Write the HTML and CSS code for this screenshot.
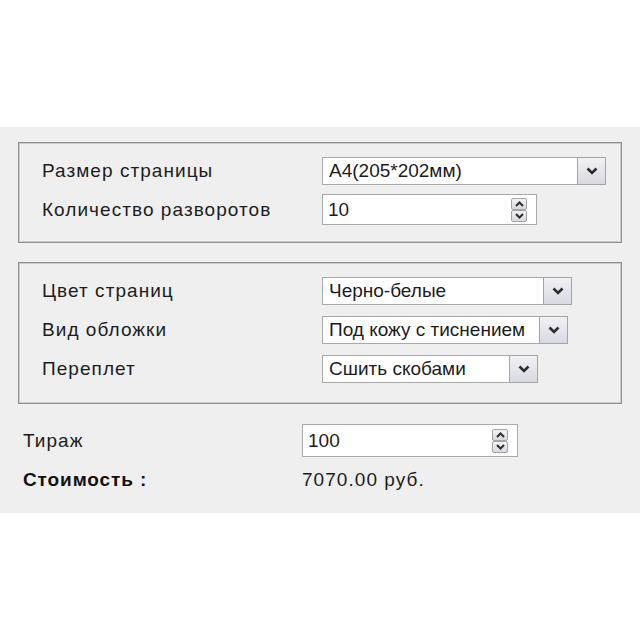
FILE: index.html
```html
<!DOCTYPE html>
<html lang="ru">
<head>
<meta charset="utf-8">
<title>Калькулятор</title>
<link rel="stylesheet" href="styles.css">
</head>
<body>
<div class="top"></div>
<div class="panel">
  <div class="group g1">
    <span class="label">Размер страницы</span>
    <div class="select s1"><span class="val">A4(205*202мм)</span><span class="btn"><svg width="12" height="8" viewBox="0 0 12 8"><polyline points="1.5,1.5 6,6 10.5,1.5" fill="none" stroke="#2e2e2e" stroke-width="2.6"/></svg></span></div>
    <span class="label">Количество разворотов</span>
    <div class="spin sp1"><span class="val">10</span><span class="arrows"><span class="ab"><svg width="9" height="6" viewBox="0 0 9 6"><polyline points="1,5 4.5,1.5 8,5" fill="none" stroke="#2e2e2e" stroke-width="2"/></svg></span><span class="ab"><svg width="9" height="6" viewBox="0 0 9 6"><polyline points="1,1 4.5,4.5 8,1" fill="none" stroke="#2e2e2e" stroke-width="2"/></svg></span></span></div>
  </div>
  <div class="group g2">
    <span class="label">Цвет страниц</span>
    <div class="select s2"><span class="val">Черно-белые</span><span class="btn"><svg width="12" height="8" viewBox="0 0 12 8"><polyline points="1.5,1.5 6,6 10.5,1.5" fill="none" stroke="#2e2e2e" stroke-width="2.6"/></svg></span></div>
    <span class="label">Вид обложки</span>
    <div class="select s3"><span class="val">Под кожу с тиснением</span><span class="btn"><svg width="12" height="8" viewBox="0 0 12 8"><polyline points="1.5,1.5 6,6 10.5,1.5" fill="none" stroke="#2e2e2e" stroke-width="2.6"/></svg></span></div>
    <span class="label">Переплет</span>
    <div class="select s4"><span class="val">Сшить скобами</span><span class="btn"><svg width="12" height="8" viewBox="0 0 12 8"><polyline points="1.5,1.5 6,6 10.5,1.5" fill="none" stroke="#2e2e2e" stroke-width="2.6"/></svg></span></div>
  </div>
  <div class="totals">
    <span class="label">Тираж</span>
    <div class="spin sp2"><span class="val">100</span><span class="arrows"><span class="ab"><svg width="9" height="6" viewBox="0 0 9 6"><polyline points="1,5 4.5,1.5 8,5" fill="none" stroke="#2e2e2e" stroke-width="2"/></svg></span><span class="ab"><svg width="9" height="6" viewBox="0 0 9 6"><polyline points="1,1 4.5,4.5 8,1" fill="none" stroke="#2e2e2e" stroke-width="2"/></svg></span></span></div>
    <span class="label bold">Стоимость :</span>
    <span class="price">7070.00 руб.</span>
  </div>
</div>
</body>
</html>
```

FILE: styles.css
```css
body {
  margin: 0;
  background: #ffffff;
  font-family: "Liberation Sans", Arial, sans-serif;
  font-size: 19px;
  color: #1c1c1c;
}
.top {
  height: 127px;
}
.panel {
  background: #efefef;
  height: 386px;
  padding: 15px 18px 0;
  box-sizing: border-box;
}
.group {
  border: 1px solid #8e8e8e;
  box-shadow: inset 0 0 0 1px #cdcdcd;
  display: grid;
  grid-template-columns: 280px auto;
  justify-content: start;
  align-items: center;
}
.g1 {
  padding: 14px 0 17px 23px;
  row-gap: 9px;
}
.g2 {
  margin-top: 19px;
  padding: 14px 0 20px 23px;
  row-gap: 11px;
}
.totals {
  margin-top: 20px;
  padding-left: 5px;
  display: grid;
  grid-template-columns: 279px auto;
  justify-content: start;
  align-items: center;
  row-gap: 12px;
}
.label {
  white-space: nowrap;
  letter-spacing: 1.05px;
}
.bold {
  font-weight: bold;
  letter-spacing: 0.9px;
  color: #111;
}
.select, .spin {
  display: flex;
  align-items: center;
  background: #ffffff;
  border: 1px solid #a9a9a9;
  box-sizing: border-box;
}
.select {
  height: 28px;
}
.select .val {
  flex: 1;
  padding-left: 6px;
  white-space: nowrap;
}
.select .btn {
  align-self: stretch;
  width: 27px;
  border: 1px solid #a4a4a4;
  background: linear-gradient(#f0f0f5, #d9d9e2);
  display: flex;
  align-items: center;
  justify-content: center;
  margin: -1px -1px -1px 0;
}
.s1 { width: 284px; }
.s2 { width: 250px; }
.s3 { width: 246px; }
.s4 { width: 216px; }
.spin .val {
  flex: 1;
  padding-left: 5px;
}
.sp1 {
  width: 215px;
  height: 31px;
}
.sp2 {
  width: 216px;
  height: 33px;
}
.arrows {
  display: flex;
  flex-direction: column;
  margin-right: 9px;
}
.ab {
  width: 16px;
  height: 12px;
  box-sizing: border-box;
  border: 1px solid #a4a4a4;
  border-radius: 2px;
  background: linear-gradient(#f2f2f6, #d7d7df);
  display: flex;
  align-items: center;
  justify-content: center;
}
.price {
  white-space: nowrap;
  letter-spacing: 1.05px;
}
```
